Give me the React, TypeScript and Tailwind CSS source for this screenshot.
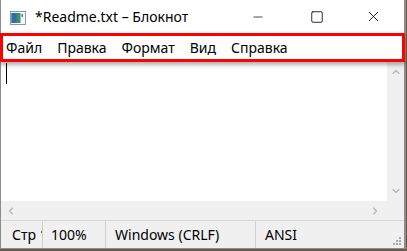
import { Minus, Square, X, ChevronUp, ChevronDown, ChevronLeft, ChevronRight } from "lucide-react";

const font = { fontFamily: '"Noto Sans", "Open Sans", sans-serif' };

function NotepadIcon() {
  return (
    <svg width="16" height="14" viewBox="0 0 16 14" aria-hidden>
      <rect x="0.5" y="0.5" width="15" height="13" fill="#f4f6f8" stroke="#8a98a8" />
      <rect x="1.5" y="2" width="9" height="10" fill="#3f8f6e" />
      <rect x="1.5" y="2" width="5" height="10" fill="#2f6fa8" />
      <rect x="11.5" y="3" width="1.5" height="3" fill="#3f8f6e" />
    </svg>
  );
}

function Grip() {
  const dots = [
    [9, 0],
    [6, 3],
    [9, 3],
    [3, 6],
    [6, 6],
    [9, 6],
  ];
  return (
    <svg width="12" height="9" viewBox="0 0 12 9" aria-hidden>
      {dots.map(([x, y]) => (
        <rect key={`${x}-${y}`} x={x} y={y} width="2" height="2" fill="#a8a8a8" />
      ))}
    </svg>
  );
}

export default function App() {
  return (
    <div className="w-[407px] h-[251px] bg-[#6b5a4a] overflow-hidden" style={font}>
      <div className="w-[406px] h-[249px] flex flex-col bg-white border-l border-r-2 border-b border-[#8c8c8c]">
        {/* title bar */}
        <div className="h-[33px] flex items-center shrink-0">
          <div className="pl-[9px] pr-[9px] pt-[2px] flex items-center">
            <NotepadIcon />
          </div>
          <span className="text-[14px] text-black leading-none pt-[1px]">*Readme.txt – Блокнот</span>
          <div className="ml-auto flex h-full">
            <div className="w-[68px] flex items-center justify-center">
              <Minus className="w-[14px] h-[14px]" strokeWidth={1.2} />
            </div>
            <div className="w-[50px] flex items-center justify-center">
              <Square className="w-[14px] h-[14px]" strokeWidth={1.4} />
            </div>
            <div className="w-[62px] flex items-center justify-center">
              <X className="w-[17px] h-[17px]" strokeWidth={1.2} />
            </div>
          </div>
        </div>

        {/* menu bar */}
        <div className="relative z-10 h-[29px] mx-[-1px] border-[3px] border-[#ff0000] flex items-center gap-[15px] pl-[3px] text-[14px] text-black shrink-0 shadow-[0_3px_4px_rgba(0,0,0,0.3)]">
          <span>Файл</span>
          <span>Правка</span>
          <span>Формат</span>
          <span>Вид</span>
          <span>Справка</span>
        </div>

        {/* edit area */}
        <div className="flex flex-1 min-h-0">
          <div className="flex-1 relative bg-white">
            <div className="absolute left-[5px] top-[1px] w-px h-[21px] bg-black" />
          </div>
          <div className="w-[17px] bg-[#f0f0f0] flex flex-col items-center justify-between py-[4px]">
            <ChevronUp className="w-[12px] h-[12px] text-[#b0b0b0]" strokeWidth={2.2} />
            <ChevronDown className="w-[12px] h-[12px] text-[#b0b0b0]" strokeWidth={2.2} />
          </div>
        </div>

        {/* horizontal scrollbar */}
        <div className="h-[19px] bg-[#f0f0f0] flex items-center shrink-0">
          <ChevronLeft className="w-[12px] h-[12px] ml-[4px] text-[#b0b0b0]" strokeWidth={2.2} />
          <ChevronRight className="w-[12px] h-[12px] ml-auto mr-[23px] text-[#b0b0b0]" strokeWidth={2.2} />
        </div>

        {/* status bar */}
        <div className="h-[28px] bg-[#f0f0f0] border-t border-[#d7d7d7] flex items-center text-[14px] text-black shrink-0">
          <div className="w-[42px] pl-[11px] overflow-hidden whitespace-nowrap border-r border-[#d0d0d0] h-full flex items-center">
            Стр 1
          </div>
          <div className="w-[63px] pl-[8px] border-r border-[#d0d0d0] h-full flex items-center">100%</div>
          <div className="w-[150px] pl-[9px] border-r border-[#d0d0d0] h-full flex items-center">Windows (CRLF)</div>
          <div className="pl-[9px] h-full flex items-center">ANSI</div>
          <div className="ml-auto self-end pb-[2px] pr-[2px]">
            <Grip />
          </div>
        </div>
      </div>
    </div>
  );
}
